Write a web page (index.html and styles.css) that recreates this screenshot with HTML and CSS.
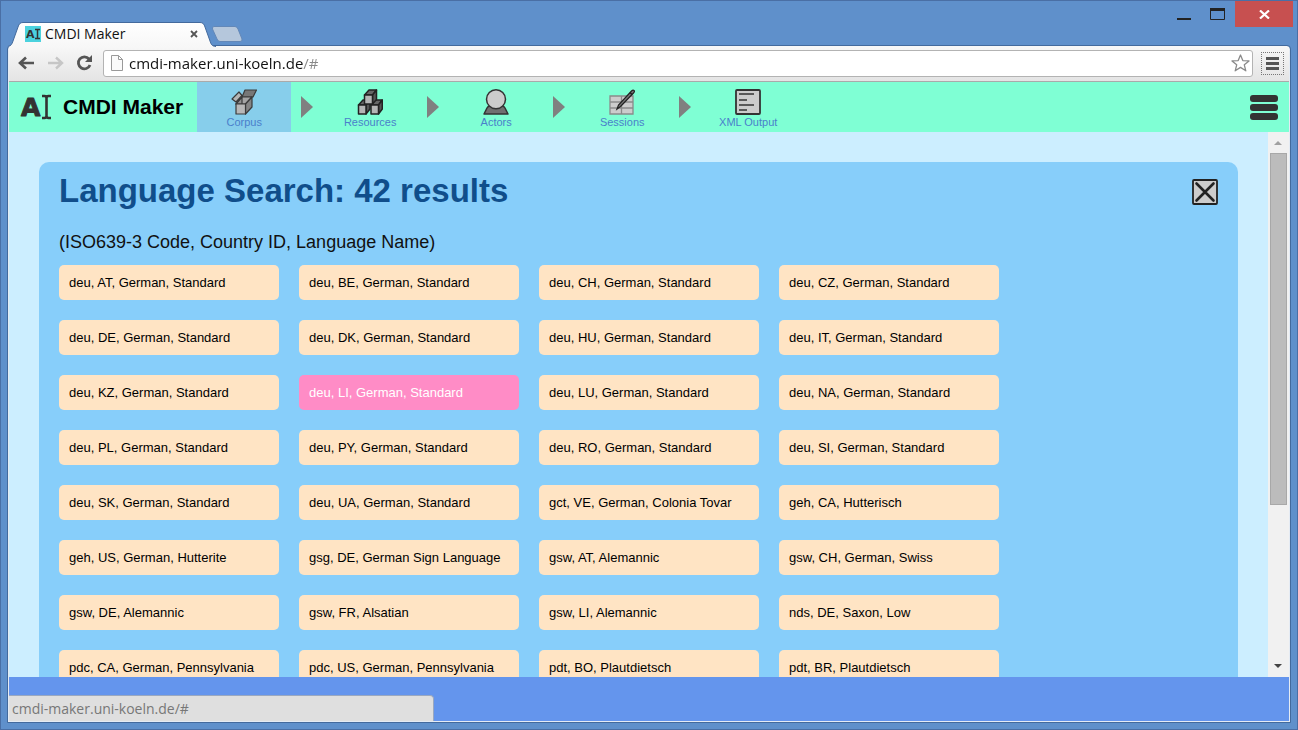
FILE: index.html
```
<!DOCTYPE html>
<html lang="en">
<head>
<meta charset="utf-8">
<title>CMDI Maker</title>
<link rel="stylesheet" href="styles.css">
</head>
<body>
<div class="window">
  <div class="titlebar">
    <div class="tab">
      <svg class="tab-shape" width="210" height="25" viewBox="0 0 210 25" aria-hidden="true">
        <defs><linearGradient id="tabfill" x1="0" y1="0" x2="0" y2="1"><stop offset="0" stop-color="#fff"/><stop offset="1" stop-color="#f7f7f7"/></linearGradient></defs>
        <path d="M0 25 V24.500 C3 24 4 22 5 19 L10 5 C11 2 12 .5 15 .5 H192 C195 .5 196 2 197 5 L202 19 C203 22 204 24.500 208 24.500 V25 Z" fill="url(#tabfill)"/>
        <path d="M0 24.500 C3 24 4 22 5 19 L10 5 C11 2 12 .5 15 .5 H192 C195 .5 196 2 197 5 L202 19 C203 22 204 24.500 208 24.500" fill="none" stroke="#436a9d"/>
      </svg>
      <svg class="favicon" width="16" height="16" viewBox="0 0 16 16" aria-hidden="true">
        <rect width="16" height="16" fill="#4bd2de"/>
        <text x="1" y="12" class="favicon-letter">A</text>
        <path d="M10 3.500h5M10 12.500h5M12.500 3.500v9" stroke="#333" stroke-width="1.500"/>
      </svg>
      <span class="tab-title">CMDI Maker</span>
      <button class="plain tab-close" aria-label="Close tab">
        <svg width="8" height="8" viewBox="0 0 8 8"><path d="M1 1l6 6M7 1L1 7" stroke="#555" stroke-width="1.800"/></svg>
      </button>
    </div>
    <button class="plain new-tab" aria-label="New tab">
      <svg width="32" height="16" viewBox="0 0 32 16"><path d="M3 .5H24Q26 .5 27 3L31 13Q31.500 15.500 29 15.500H9Q7 15.500 6 13L1.500 3Q1 .5 3 .5Z" fill="#b5c7dc" stroke="#6388b8"/></svg>
    </button>
    <div class="controls">
      <button class="plain minimize" aria-label="Minimize"><svg width="14" height="20" viewBox="0 0 14 20"><path d="M0 17h14v2H0z" fill="#222"/></svg></button>
      <button class="plain maximize" aria-label="Maximize"><svg width="15" height="20" viewBox="0 0 15 20"><path d="M.5 7.500h14v11H.5z" fill="none" stroke="#222"/><path d="M0 7h15v3H0z" fill="#222"/></svg></button>
      <button class="plain close" aria-label="Close window"><svg width="11" height="9" viewBox="0 0 11 9"><path d="M1 .5l9 8M10 .5l-9 8" stroke="#fff" stroke-width="2.200"/></svg></button>
    </div>
  </div>

  <div class="frame">
    <div class="toolbar">
      <button class="plain" aria-label="Back"><svg width="17" height="14" viewBox="0 0 17 14"><path d="M16 7H3M8 1.500L2 7l6 5.500" fill="none" stroke="#555" stroke-width="2.600"/></svg></button>
      <button class="plain" aria-label="Forward"><svg width="17" height="14" viewBox="0 0 17 14"><path d="M1 7h13M9 1.500L15 7l-6 5.500" fill="none" stroke="#c6c6c6" stroke-width="2.400"/></svg></button>
      <button class="plain" aria-label="Reload"><svg width="17" height="16" viewBox="0 0 17 16"><path d="M13 4A6 6 0 1 0 14 10" fill="none" stroke="#555" stroke-width="2.800"/><path d="M16 0v7H9z" fill="#555"/></svg></button>
      <div class="address">
        <svg width="12" height="16" viewBox="0 0 12 16" aria-hidden="true"><path d="M.5.5h7l4 4v11H.5zM7.500.5v4h4" fill="#fafafa" stroke="#999"/></svg>
        <input class="url" type="text" aria-label="Address" value="cmdi-maker.uni-koeln.de/#">
        <button class="plain" aria-label="Bookmark"><svg width="19" height="18" viewBox="0 0 19 18"><path d="M9.500 1l2.300 5.600 6.200.3-4.700 3.900 1.500 6-5.300-3.400-5.300 3.400 1.500-6L1 6.900l6.200-.3z" fill="#fff" stroke="#8a8a8a" stroke-width="1.300" stroke-linejoin="round"/></svg></button>
      </div>
      <button class="plain browser-menu" aria-label="Browser menu"><svg width="13" height="13" viewBox="0 0 13 13"><path d="M0 1.500h13M0 6.500h13M0 11.500h13" stroke="#555" stroke-width="3"/></svg></button>
    </div>

    <header class="app-header">
      <svg class="logo" width="30" height="26" viewBox="0 0 30 26" aria-hidden="true">
        <text x="0" y="22" class="logo-letter">A</text>
        <path d="M21 2h2.500q2 0 2 2v18q0 2-2 2H21M30 2h-2.500q-2 0-2 2M30 24h-2.500q-2 0-2-2" fill="none" stroke="#333" stroke-width="2.600"/>
      </svg>
      <span class="app-name">CMDI Maker</span>
      <nav class="steps">
        <button class="plain step active">
          <svg width="26" height="26" viewBox="0 0 26 26" aria-hidden="true"><g stroke="#3a3a3a" stroke-width="1.200" stroke-linejoin="round"><path d="M14 1H25.500L22 8H11z" fill="#777"/><path d="M5 15L11 8H21L14.500 15z" fill="#a5a5a5"/><path d="M11 8V15H5z" fill="#909090"/><path d="M1 10L8 3L11 6.500L5 13z" fill="#b5b5b5"/><path d="M14.500 15L21 8V18L14.500 25z" fill="#858585"/><path d="M5 15H14.500V25H5z" fill="#b8b8b8"/></g></svg>
          <span>Corpus</span>
        </button>
        <svg class="arrow" width="12" height="22" viewBox="0 0 12 22" aria-hidden="true"><path d="M0 0L12 11L0 22z" fill="#808080"/></svg>
        <button class="plain step">
          <svg width="26" height="26" viewBox="0 0 26 26" aria-hidden="true"><g stroke="#222" stroke-width="1.500" stroke-linejoin="round"><path d="M1.500 16L6 11H13L9 16z" fill="#666"/><path d="M9 16L13 11V20L9 25z" fill="#555"/><path d="M14 16L18 11H25.300L21.500 16z" fill="#666"/><path d="M21.500 16L25.300 11V20L21.500 25z" fill="#555"/><path d="M7.500 6L12 1H19.500L15.500 6z" fill="#666"/><path d="M15.500 6L19.500 1V10.500L15.500 15z" fill="#555"/><path d="M7.500 6H15.500V15H7.500zM1.500 16H9V25H1.500zM14 16H21.500V25H14z" fill="#b5b5b5"/></g></svg>
          <span>Resources</span>
        </button>
        <svg class="arrow" width="12" height="22" viewBox="0 0 12 22" aria-hidden="true"><path d="M0 0L12 11L0 22z" fill="#808080"/></svg>
        <button class="plain step">
          <svg width="26" height="26" viewBox="0 0 26 26" aria-hidden="true"><g stroke="#333" stroke-width="1.500" stroke-linejoin="round"><path d="M1 25L4 19Q5 17 7 17H19Q21 17 22 19L25 25z" fill="#707070"/><circle cx="13" cy="10.300" r="9.500" fill="#ccc"/></g></svg>
          <span>Actors</span>
        </button>
        <svg class="arrow" width="12" height="22" viewBox="0 0 12 22" aria-hidden="true"><path d="M0 0L12 11L0 22z" fill="#808080"/></svg>
        <button class="plain step">
          <svg width="26" height="26" viewBox="0 0 26 26" aria-hidden="true"><path d="M1 7h23v18H1zM1 13h23M1 19h23M12.500 7v18" fill="#ccc" stroke="#8a8a8a" stroke-width="1.300"/><path d="M8 20l1.500-4L22.500 2q1.500-1.500 2.500-.5t-.5 2.500L11.500 17.500z" fill="#777" stroke="#222" stroke-width="1.200"/><path d="M21 3.500l2 2" stroke="#222" stroke-width="1.500"/></svg>
          <span>Sessions</span>
        </button>
        <svg class="arrow" width="12" height="22" viewBox="0 0 12 22" aria-hidden="true"><path d="M0 0L12 11L0 22z" fill="#808080"/></svg>
        <button class="plain step">
          <svg width="26" height="26" viewBox="0 0 26 26" aria-hidden="true"><rect x="1" y="1" width="24" height="24" rx="1" fill="#ccc" stroke="#333" stroke-width="1.800"/><path d="M4 5h15M4 11h8M4 16h15M4 21h8" stroke="#333" stroke-width="1.700"/></svg>
          <span>XML Output</span>
        </button>
      </nav>
      <button class="plain app-menu" aria-label="Menu"><svg width="28" height="25" viewBox="0 0 28 25"><g fill="#333"><rect y="0" width="28" height="7" rx="3"/><rect y="9" width="28" height="7" rx="3"/><rect y="18" width="28" height="7" rx="3"/></g></svg></button>
    </header>

    <div class="view">
      <main class="content">
        <section class="card">
          <div class="card-head">
            <h1>Language Search: 42 results</h1>
            <button class="plain card-close" aria-label="Close results"><svg width="26" height="26" viewBox="0 0 26 26"><rect x="1" y="1" width="24" height="24" rx="1" fill="#ccc" stroke="#222" stroke-width="1.800"/><path d="M4.500 4.500l17 17M21.500 4.500l-17 17" stroke="#222" stroke-width="2.600" stroke-linecap="round"/></svg></button>
          </div>
          <p class="legend">(ISO639-3 Code, Country ID, Language Name)</p>
          <div class="results">
            <button class="result">deu, AT, German, Standard</button>
            <button class="result">deu, BE, German, Standard</button>
            <button class="result">deu, CH, German, Standard</button>
            <button class="result">deu, CZ, German, Standard</button>
            <button class="result">deu, DE, German, Standard</button>
            <button class="result">deu, DK, German, Standard</button>
            <button class="result">deu, HU, German, Standard</button>
            <button class="result">deu, IT, German, Standard</button>
            <button class="result">deu, KZ, German, Standard</button>
            <button class="result hovered">deu, LI, German, Standard</button>
            <button class="result">deu, LU, German, Standard</button>
            <button class="result">deu, NA, German, Standard</button>
            <button class="result">deu, PL, German, Standard</button>
            <button class="result">deu, PY, German, Standard</button>
            <button class="result">deu, RO, German, Standard</button>
            <button class="result">deu, SI, German, Standard</button>
            <button class="result">deu, SK, German, Standard</button>
            <button class="result">deu, UA, German, Standard</button>
            <button class="result">gct, VE, German, Colonia Tovar</button>
            <button class="result">geh, CA, Hutterisch</button>
            <button class="result">geh, US, German, Hutterite</button>
            <button class="result">gsg, DE, German Sign Language</button>
            <button class="result">gsw, AT, Alemannic</button>
            <button class="result">gsw, CH, German, Swiss</button>
            <button class="result">gsw, DE, Alemannic</button>
            <button class="result">gsw, FR, Alsatian</button>
            <button class="result">gsw, LI, Alemannic</button>
            <button class="result">nds, DE, Saxon, Low</button>
            <button class="result">pdc, CA, German, Pennsylvania</button>
            <button class="result">pdc, US, German, Pennsylvania</button>
            <button class="result">pdt, BO, Plautdietsch</button>
            <button class="result">pdt, BR, Plautdietsch</button>
          </div>
        </section>
      </main>
      <div class="scrollbar" aria-hidden="true">
        <svg width="17" height="21" viewBox="0 0 17 21"><path d="M6 13h8l-4-4z" fill="#a0a0a0"/></svg>
        <div class="track"><div class="thumb"></div></div>
        <svg width="17" height="21" viewBox="0 0 17 21"><path d="M6 8h8l-4 4z" fill="#444"/></svg>
      </div>
    </div>

    <footer class="footer">
      <div class="status">cmdi-maker.uni-koeln.de/#</div>
    </footer>
  </div>
</div>
</body>
</html>
```

FILE: styles.css
```
* {
  box-sizing: border-box;
}

body {
  margin: 0;
  font-family: "Liberation Sans", Arial, sans-serif;
}

.plain {
  display: flex;
  align-items: center;
  justify-content: center;
  margin: 0;
  padding: 0;
  border: 0;
  background: none;
  font: inherit;
}

.window {
  display: flex;
  flex-direction: column;
  height: 100vh;
  padding: 0 7px 7px;
  border: 1px solid #4a6fa5;
  background: #5f90cb;
  overflow: hidden;
}

/* Title bar */
.titlebar {
  display: flex;
  flex: none;
  align-items: flex-end;
  height: 45px;
}

.tab {
  position: relative;
  z-index: 1;
  display: flex;
  align-items: center;
  width: 203px;
  height: 25px;
  padding: 0 13px 0 17px;
}

.tab-shape {
  position: absolute;
  left: 0;
  bottom: -1px;
}

.favicon,
.tab-title,
.tab-close {
  position: relative;
}

.favicon-letter {
  font: bold 11px "DejaVu Sans", sans-serif;
  fill: #333;
}

.tab-title {
  flex: 1;
  padding-left: 4px;
  font: 14px/20px "Open Sans", sans-serif;
  color: #111;
}

.new-tab {
  align-self: flex-end;
  padding-bottom: 4px;
}

.controls {
  display: flex;
  align-self: flex-start;
  align-items: flex-start;
  margin-left: auto;
  margin-right: -3px;
}

.minimize {
  margin-right: 19px;
}

.maximize {
  margin-right: 10px;
}

.close {
  width: 58px;
  height: 26px;
  background: #c75050;
}

/* Browser frame */
.frame {
  display: flex;
  flex: 1;
  flex-direction: column;
  min-height: 0;
  border: 1px solid #e4ebf4;
  border-top-color: #f7f7f7;
  border-radius: 3px 3px 0 0;
  outline: 1px solid #436a9d;
}

.toolbar {
  display: flex;
  flex: none;
  align-items: center;
  gap: 12px;
  height: 35px;
  padding: 0 5px 2px 9px;
  border-bottom: 1px solid #aaa;
  background: linear-gradient(#f7f7f7, #e4e4e4);
}

.address {
  display: flex;
  flex: 1;
  align-items: center;
  height: 27px;
  margin-left: -2px;
  padding: 0 2px 0 7px;
  border: 1px solid #b3b3b3;
  border-radius: 3px;
  background: #fff;
}

.url {
  flex: 1;
  min-width: 0;
  padding: 0 6px;
  border: 0;
  outline: 0;
  font: 15px/22px "Open Sans", sans-serif;
  color: transparent;
  background: linear-gradient(90deg, #111 180px, #888 180px);
  -webkit-background-clip: text;
  background-clip: text;
}

.browser-menu {
  width: 23px;
  height: 23px;
  margin-left: -4px;
  border: 1px dotted #777;
}

/* Application header */
.app-header {
  display: flex;
  flex: none;
  align-items: center;
  height: 50px;
  padding: 0 11px 0 12px;
  background: #7fffd4;
}

.logo {
  overflow: visible;
}

.logo-letter {
  font: bold 25px "DejaVu Sans", sans-serif;
  fill: #333;
  stroke: #333;
  stroke-linejoin: round;
}

.app-name {
  padding: 0 14px 0 12px;
  font-size: 21px;
  font-weight: bold;
  line-height: 24px;
  white-space: nowrap;
}

.steps {
  display: flex;
  align-items: center;
}

.step {
  flex-direction: column;
  width: 94px;
  height: 50px;
  padding-top: 5px;
  font-size: 11px;
  line-height: 15px;
  color: #4a7fcb;
}

.active {
  background: #87ceeb;
}

.arrow {
  margin: 0 10px;
}

.app-menu {
  margin-left: auto;
}

/* Scrolling view */
.view {
  display: flex;
  flex: 1;
  min-height: 0;
  background: #cef;
}

.content {
  flex: 1;
  padding: 30px;
  overflow: hidden;
}

.card {
  padding: 9px 20px 20px;
  border-radius: 10px;
  background: #87cefa;
}

.card-head {
  display: flex;
  align-items: center;
  justify-content: space-between;
}

h1 {
  margin: 0;
  font-size: 33px;
  line-height: 40px;
  color: #104e8b;
}

.card-close {
  padding-top: 2px;
}

.legend {
  margin: 19px 0 11px;
  font-size: 18px;
  line-height: 24px;
  color: #111;
}

.results {
  display: grid;
  grid-template-columns: repeat(auto-fill, 220px);
  gap: 20px;
}

.result {
  height: 35px;
  padding: 0 10px;
  border: 0;
  border-radius: 5px;
  background: #ffe4c4;
  font: 13px/16px "Liberation Sans", Arial, sans-serif;
  color: #000;
  text-align: left;
}

.hovered {
  background: #ff8cc6;
  color: #fff;
}

.scrollbar {
  display: flex;
  flex: none;
  flex-direction: column;
  width: 21px;
  padding-right: 2px;
  background: #f1f1f1;
}

.track {
  flex: 1;
}

.thumb {
  height: 70%;
  margin-left: 2px;
  border: 1px solid #a8a8a8;
  background: #bcbcbc;
}

/* Footer */
.footer {
  display: flex;
  flex: none;
  align-items: flex-end;
  height: 44px;
  background: #6495ed;
}

.status {
  width: 33.200%;
  height: 26px;
  padding-left: 3px;
  border: 1px solid #9aa8c0;
  border-width: 1px 1px 0 0;
  border-radius: 0 4px 0 0;
  background: #dfdfdf;
  font: 14px/26px "Open Sans", sans-serif;
  color: #777;
}
```
